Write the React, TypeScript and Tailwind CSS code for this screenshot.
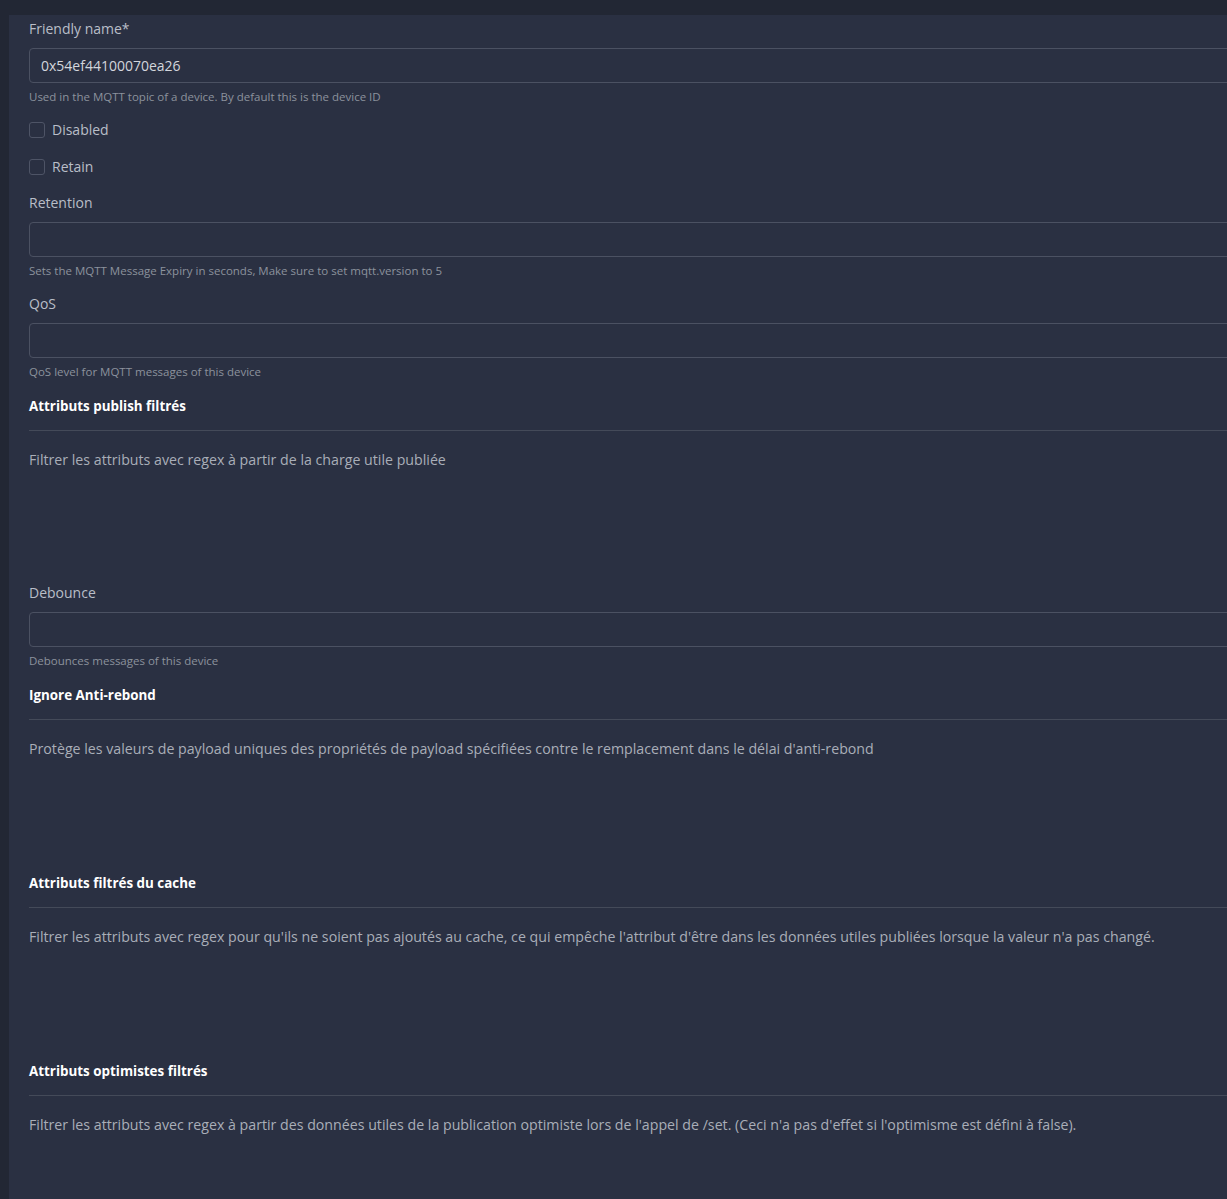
import React from "react";

const font = { fontFamily: '"Open Sans", "Noto Sans", sans-serif' };

function Field({ label, value, help }: { label: string; value?: string; help: string }) {
  return (
    <div className="flex flex-col">
      <label className="text-[14px] leading-[22px] text-[#b9bec8] mb-[8px]">{label}</label>
      <div className="h-[35px] w-full rounded-[4px] border border-[#4b5162] flex items-center pl-[11px] text-[14px] text-[#d3d6dc]">
        {value}
      </div>
      <div className="mt-[5px] text-[11.5px] leading-[18px] text-[#8c929d]">{help}</div>
    </div>
  );
}

function Check({ label }: { label: string }) {
  return (
    <div className="flex items-center h-[22px]">
      <span className="w-[16px] h-[16px] rounded-[3px] border border-[#4e5466] mr-[7px]" />
      <span className="text-[14px] leading-[22px] text-[#b9bec8]">{label}</span>
    </div>
  );
}

function Section({ title, desc }: { title: string; desc: string }) {
  return (
    <div className="flex flex-col">
      <div className="text-[13.4px] leading-[22px] font-bold text-white">{title}</div>
      <div className="mt-[13px] h-px bg-[#444a59]" />
      <div className="mt-[18px] text-[14.2px] leading-[22px] text-[#a9aeb8]">{desc}</div>
    </div>
  );
}

export default function App() {
  return (
    <div className="h-screen w-full overflow-hidden bg-[#222734] pt-[15px] pl-[9px]" style={font}>
      <div className="w-[1300px] h-full bg-[#2a3042] pl-[20px] pt-[3px] flex flex-col">
        <Field label="Friendly name*" value="0x54ef44100070ea26" help="Used in the MQTT topic of a device. By default this is the device ID" />
        <div className="mt-[13px]"><Check label="Disabled" /></div>
        <div className="mt-[15px]"><Check label="Retain" /></div>
        <div className="mt-[14px]">
          <Field label="Retention" help="Sets the MQTT Message Expiry in seconds, Make sure to set mqtt.version to 5" />
        </div>
        <div className="mt-[13px]">
          <Field label="QoS" help="QoS level for MQTT messages of this device" />
        </div>
        <div className="mt-[14px]">
          <Section title="Attributs publish filtrés" desc="Filtrer les attributs avec regex à partir de la charge utile publiée" />
        </div>
        <div className="mt-[111px]">
          <Field label="Debounce" help="Debounces messages of this device" />
        </div>
        <div className="mt-[14px]">
          <Section title="Ignore Anti-rebond" desc="Protège les valeurs de payload uniques des propriétés de payload spécifiées contre le remplacement dans le délai d'anti-rebond" />
        </div>
        <div className="mt-[112px]">
          <Section title="Attributs filtrés du cache" desc="Filtrer les attributs avec regex pour qu'ils ne soient pas ajoutés au cache, ce qui empêche l'attribut d'être dans les données utiles publiées lorsque la valeur n'a pas changé." />
        </div>
        <div className="mt-[112px]">
          <Section title="Attributs optimistes filtrés" desc="Filtrer les attributs avec regex à partir des données utiles de la publication optimiste lors de l'appel de /set. (Ceci n'a pas d'effet si l'optimisme est défini à false)." />
        </div>
      </div>
    </div>
  );
}
